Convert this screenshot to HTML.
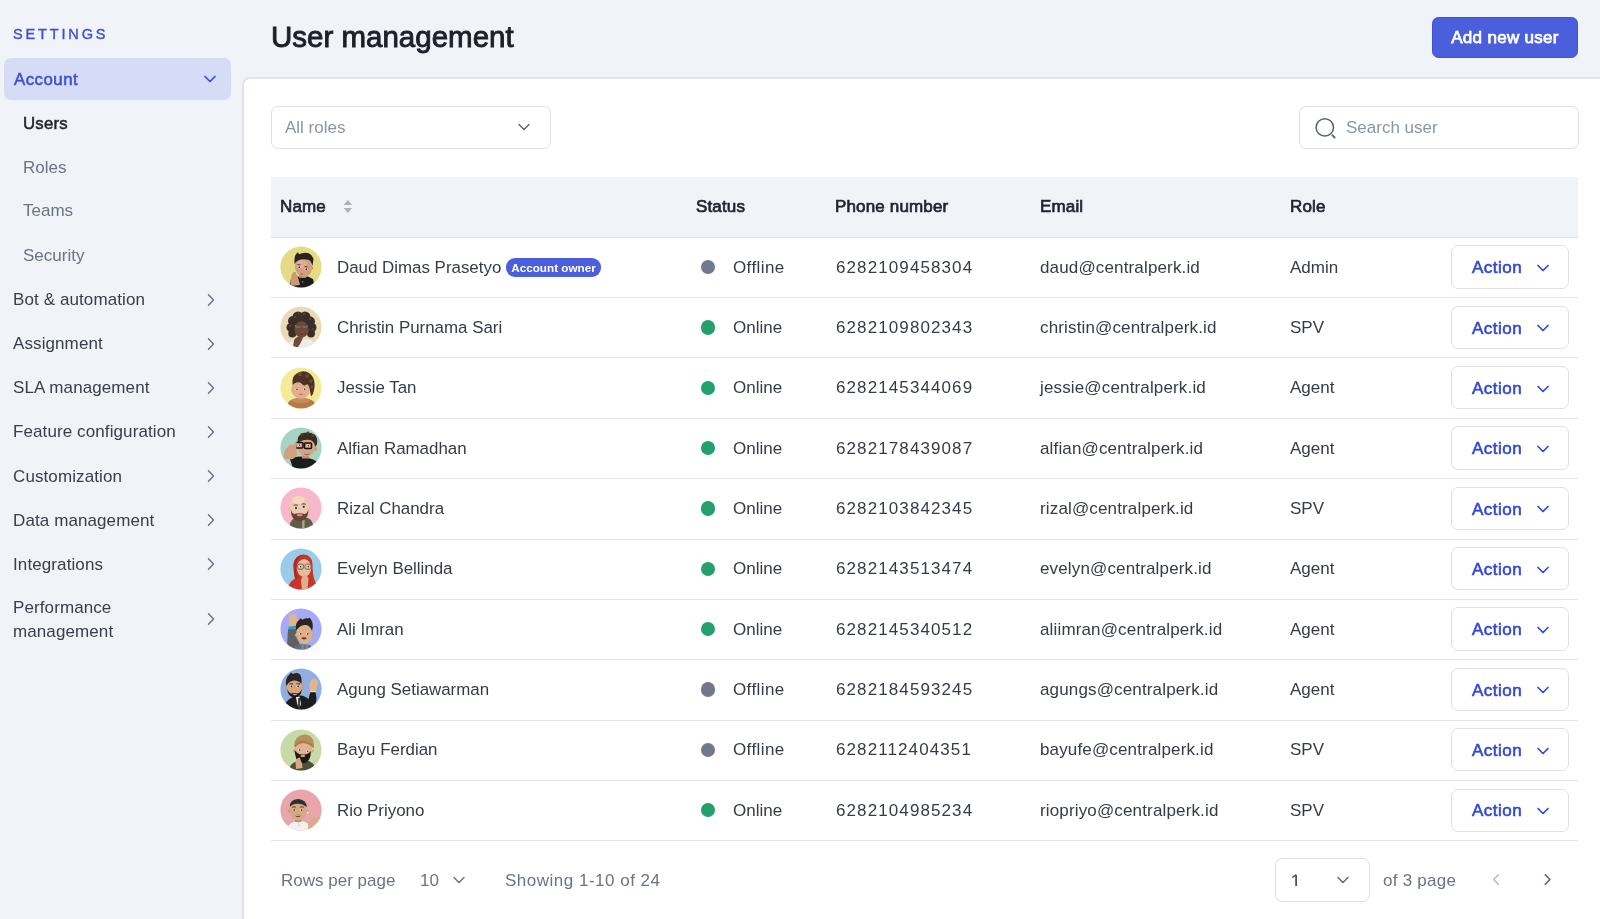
<!DOCTYPE html>
<html><head><meta charset="utf-8">
<style>
*{box-sizing:border-box;margin:0;padding:0}
html,body{width:1600px;height:919px;overflow:hidden;background:#F0F3F8;font-family:"Liberation Sans",sans-serif;color:#1F2430}
.abs{position:absolute;white-space:nowrap;will-change:transform}
.act span,.acc span,.btn,.badge{will-change:transform}
.settings{left:13px;top:26.4px;font-size:14.5px;letter-spacing:2.85px;color:#3D50D0;-webkit-text-stroke:0.4px #3D50D0}
.acc{position:absolute;left:3.75px;top:58px;width:227px;height:41.5px;background:#D6DBF6;border-radius:7px}
.acc span{position:absolute;left:10.4px;top:11.8px;letter-spacing:0.5px;font-size:16.8px;color:#3D50D0;-webkit-text-stroke:0.55px #3D50D0}
.nav{font-size:17px;letter-spacing:0.1px;color:#383E4B}
.sub{font-size:17px;color:#6B7385}
.chev{position:absolute}
#main{position:absolute;left:242.3px;top:77px;width:1360px;height:850px;background:#fff;border-top-left-radius:8px;border:2px solid #E2E4E9}
.title{left:271px;top:19.8px;font-size:29.5px;color:#1C202A;-webkit-text-stroke:0.9px #1C202A}
.btn{position:absolute;left:1432px;top:16.8px;width:146px;height:41.2px;letter-spacing:0.3px;background:#4B5EDB;border:1px solid #3E52D6;border-radius:6.5px;color:#fff;-webkit-text-stroke:0.75px #fff;font-size:17px;text-align:center;line-height:40px}
.inp{position:absolute;height:43.5px;border:1.5px solid #DEE0E5;border-radius:7px;background:#fff}
.ph{font-size:17px;color:#8D95A5}
.thead{position:absolute;left:271px;top:177px;width:1307px;height:61.2px;background:#F0F3F8;border-bottom:1.5px solid #DDE0E6}
.th{font-size:17px;letter-spacing:0.15px;color:#1F2430;-webkit-text-stroke:0.7px #1F2430;top:196.5px}
.row{position:absolute;left:271px;width:1307px;height:60.35px;border-bottom:1.6px solid #E2E4E9}
.td{font-size:17px;color:#363B47}
.ph2{letter-spacing:1.1px}
.nm{font-size:16.9px}
.em{letter-spacing:0.15px}
.dot{position:absolute;width:14.2px;height:14.2px;border-radius:50%}
.act{position:absolute;left:1451.3px;width:118px;height:43.3px;border:1.5px solid #DEE0E5;border-radius:7px;background:#fff}
.act span{position:absolute;left:19.5px;top:11.8px;letter-spacing:0.5px;font-size:17px;color:#3249D4;-webkit-text-stroke:0.6px #3249D4}
.badge{position:absolute;left:506px;top:257.5px;width:95px;height:18.5px;background:#4B5EDB;border-radius:9px;color:#fff;font-size:11.7px;font-weight:bold;text-align:center;line-height:19.5px}
.foot{font-size:17px;color:#6B7385}
</style></head><body>
<div class="abs settings">SETTINGS</div>
<div class="acc"><span>Account</span>
  <svg class="chev" style="left:199px;top:16px" width="14" height="10" viewBox="0 0 14 10"><path d="M2 2.5 L7 7.5 L12 2.5" fill="none" stroke="#3D50D0" stroke-width="1.7" stroke-linecap="round" stroke-linejoin="round"/></svg>
</div>
<div class="abs sub" style="left:22.5px;top:113.5px;color:#1F2430;-webkit-text-stroke:0.55px #1F2430;font-size:16.8px;letter-spacing:0.2px">Users</div>
<div class="abs sub" style="left:22.5px;top:157.5px">Roles</div>
<div class="abs sub" style="left:22.5px;top:201px">Teams</div>
<div class="abs sub" style="left:22.5px;top:246px">Security</div>
<div class="abs nav" style="left:12.8px;top:289.5px">Bot &amp; automation</div>
<div class="abs nav" style="left:12.8px;top:334px">Assignment</div>
<div class="abs nav" style="left:12.8px;top:378px">SLA management</div>
<div class="abs nav" style="left:12.8px;top:422px">Feature configuration</div>
<div class="abs nav" style="left:12.8px;top:466.5px">Customization</div>
<div class="abs nav" style="left:12.8px;top:510.5px">Data management</div>
<div class="abs nav" style="left:12.8px;top:555px">Integrations</div>
<div class="abs nav" style="left:12.8px;top:596.3px;line-height:23.5px">Performance<br>management</div>
<svg class="abs" style="left:205px;top:292.5px" width="12" height="14" viewBox="0 0 12 14"><path d="M3.5 1.8 L8.5 7 L3.5 12.2" fill="none" stroke="#667089" stroke-width="1.4" stroke-linecap="round" stroke-linejoin="round"/></svg><svg class="abs" style="left:205px;top:336.5px" width="12" height="14" viewBox="0 0 12 14"><path d="M3.5 1.8 L8.5 7 L3.5 12.2" fill="none" stroke="#667089" stroke-width="1.4" stroke-linecap="round" stroke-linejoin="round"/></svg><svg class="abs" style="left:205px;top:380.5px" width="12" height="14" viewBox="0 0 12 14"><path d="M3.5 1.8 L8.5 7 L3.5 12.2" fill="none" stroke="#667089" stroke-width="1.4" stroke-linecap="round" stroke-linejoin="round"/></svg><svg class="abs" style="left:205px;top:424.5px" width="12" height="14" viewBox="0 0 12 14"><path d="M3.5 1.8 L8.5 7 L3.5 12.2" fill="none" stroke="#667089" stroke-width="1.4" stroke-linecap="round" stroke-linejoin="round"/></svg><svg class="abs" style="left:205px;top:469px" width="12" height="14" viewBox="0 0 12 14"><path d="M3.5 1.8 L8.5 7 L3.5 12.2" fill="none" stroke="#667089" stroke-width="1.4" stroke-linecap="round" stroke-linejoin="round"/></svg><svg class="abs" style="left:205px;top:513px" width="12" height="14" viewBox="0 0 12 14"><path d="M3.5 1.8 L8.5 7 L3.5 12.2" fill="none" stroke="#667089" stroke-width="1.4" stroke-linecap="round" stroke-linejoin="round"/></svg><svg class="abs" style="left:205px;top:557px" width="12" height="14" viewBox="0 0 12 14"><path d="M3.5 1.8 L8.5 7 L3.5 12.2" fill="none" stroke="#667089" stroke-width="1.4" stroke-linecap="round" stroke-linejoin="round"/></svg><svg class="abs" style="left:205px;top:612.4px" width="12" height="14" viewBox="0 0 12 14"><path d="M3.5 1.8 L8.5 7 L3.5 12.2" fill="none" stroke="#667089" stroke-width="1.4" stroke-linecap="round" stroke-linejoin="round"/></svg>
<div class="abs title">User management</div>
<div class="btn">Add new user</div>
<div id="main"></div>
<div class="inp" style="left:270.5px;top:105.5px;width:280px"></div>
<div class="abs ph" style="left:285px;top:117.5px">All roles</div>
<svg class="abs" style="left:517px;top:122px" width="14" height="10" viewBox="0 0 14 10"><path d="M2 2.5 L7 7.5 L12 2.5" fill="none" stroke="#5F6878" stroke-width="1.5" stroke-linecap="round" stroke-linejoin="round"/></svg>
<div class="inp" style="left:1298.8px;top:105.5px;width:280.5px"></div>
<svg class="abs" style="left:1313px;top:115.5px" width="24" height="24" viewBox="0 0 24 24"><circle cx="11.8" cy="11.4" r="8.7" fill="none" stroke="#56627A" stroke-width="1.55"/><path d="M19.3 19.2 L21.6 21.5" stroke="#56627A" stroke-width="1.9" stroke-linecap="round"/></svg>
<div class="abs ph" style="left:1346px;top:117.5px">Search user</div>
<div class="thead"></div>
<div class="abs th" style="left:280.2px">Name</div>
<svg class="abs" style="left:342px;top:199px" width="12" height="16" viewBox="0 0 12 16"><path d="M1.7 5.9 L5.9 0.9 L10.1 5.9Z M1.7 9 L5.9 13.9 L10.1 9Z" fill="#ABB1BD"/></svg>
<div class="abs th" style="left:696px">Status</div>
<div class="abs th" style="left:834.6px">Phone number</div>
<div class="abs th" style="left:1039.6px">Email</div>
<div class="abs th" style="left:1290.4px">Role</div>
<div class="row" style="top:237.80px"></div>
<svg class="abs" style="left:280.2px;top:245.98px" width="42" height="42" viewBox="0 0 42 42"><defs><clipPath id="c0"><circle cx="21" cy="21" r="20.6"/></clipPath></defs><g clip-path="url(#c0)"><rect width="42" height="42" fill="#E5DB86"/>
<path d="M9 42 L11 33 L16 30.5 L22 31 L28 30.5 L33 33 L35 42Z" fill="#1C1C1C"/>
<rect x="19" y="27" width="7" height="5" fill="#B98560"/>
<circle cx="31.8" cy="22" r="1.6" fill="#C48F6C"/>
<ellipse cx="23.5" cy="21" rx="8.5" ry="10" transform="rotate(-12 23.5 21)" fill="#D2A07D"/>
<ellipse cx="22" cy="18" rx="5" ry="4" fill="#DDB08F"/>
<path d="M14.5 18 Q14 11 16 8 L18 6.2 L19 8.3 Q23 6 28 7 Q32 8.5 33.5 13 L32.5 20 Q31 15 29 14 Q23 12.5 18 14.5 Q15.5 16 14.5 18Z" fill="#2A2321"/>
<ellipse cx="19" cy="21.2" rx="1.6" ry="1.15" fill="#F4EEEA"/><circle cx="19.2" cy="21.2" r="0.85" fill="#2A2220"/><circle cx="19.2" cy="21.2" r="0.425" fill="#111"/><ellipse cx="26" cy="23.2" rx="1.6" ry="1.15" fill="#F4EEEA"/><circle cx="26.2" cy="23.2" r="0.85" fill="#2A2220"/><circle cx="26.2" cy="23.2" r="0.425" fill="#111"/>
<path d="M17.5 18.5 L20.5 18.8 M24.5 20.3 L27.5 21" stroke="#2A2321" stroke-width="0.8"/>
<ellipse cx="21.8" cy="28" rx="1.5" ry="0.7" fill="#A86A5A"/>
<path d="M10.5 40 Q10 33 12 28 Q13.5 25 15.5 26 Q17 29 18.5 33 L20 39Z" fill="#CE9A76"/>
<path d="M21.5 35 L23.5 35 L23 38Z" fill="#3A6AB0"/>
</g></svg>
<div class="abs td nm"  style="left:337px;top:257.57px">Daud Dimas Prasetyo</div>
<div class="dot" style="left:700.7px;top:259.98px;background:#717A8C"></div>
<div class="abs td st" style="left:733px;top:257.57px;letter-spacing:0.4px">Offline</div>
<div class="abs td ph2" style="left:835.5px;top:257.57px">6282109458304</div>
<div class="abs td em" style="left:1040px;top:257.57px">daud@centralperk.id</div>
<div class="abs td rl" style="left:1290px;top:257.57px">Admin</div>
<div class="act" style="top:245.38px"><span>Action</span><svg class="chev" style="left:84px;top:16.5px" width="14" height="10" viewBox="0 0 14 10"><path d="M2 2.5 L7 7.5 L12 2.5" fill="none" stroke="#3249D4" stroke-width="1.7" stroke-linecap="round" stroke-linejoin="round"/></svg></div>
<div class="row" style="top:298.15px"></div>
<svg class="abs" style="left:280.2px;top:306.33px" width="42" height="42" viewBox="0 0 42 42"><defs><clipPath id="c1"><circle cx="21" cy="21" r="20.6"/></clipPath></defs><g clip-path="url(#c1)"><rect width="42" height="42" fill="#EBDAB6"/>
<g fill="#3A2E29"><circle cx="13" cy="15" r="5"/><circle cx="18" cy="11" r="5.5"/><circle cx="25" cy="11" r="5.5"/><circle cx="30" cy="15.5" r="5"/><circle cx="32" cy="21.5" r="4.5"/><circle cx="11" cy="21.5" r="4.5"/><circle cx="12.3" cy="27.5" r="4"/><circle cx="31" cy="27.5" r="4"/><circle cx="21.5" cy="15" r="6.5"/></g>
<g fill="#54443A"><circle cx="15" cy="11" r="1.3"/><circle cx="24" cy="8" r="1.3"/><circle cx="30" cy="13" r="1.2"/><circle cx="10" cy="20" r="1.2"/><circle cx="33" cy="23" r="1.2"/><circle cx="19" cy="7.5" r="1.1"/></g>
<path d="M9 42 L10 36 L14 33.5 L22 33 L30 33.5 L33 36 L34 42Z" fill="#EEEDEB"/>
<ellipse cx="21.5" cy="23.5" rx="7" ry="8.3" fill="#6B4A39"/>
<path d="M15.5 21 L20.5 21 M22.5 21 L27.5 21" stroke="#7F8A88" stroke-width="0.9"/>
<ellipse cx="22" cy="27.8" rx="1.4" ry="1.7" fill="#B84A4A"/><ellipse cx="22" cy="28" rx="0.8" ry="1.1" fill="#2A1A1A"/>
<path d="M13 41 L14 34 Q17 30 21 29.5 Q23.5 30 22.5 33 L20 38 L18 41Z" fill="#6E4C3B"/>
</g></svg>
<div class="abs td nm"  style="left:337px;top:317.93px">Christin Purnama Sari</div>
<div class="dot" style="left:700.7px;top:320.33px;background:#23A06B"></div>
<div class="abs td st" style="left:733px;top:317.93px;letter-spacing:0">Online</div>
<div class="abs td ph2" style="left:835.5px;top:317.93px">6282109802343</div>
<div class="abs td em" style="left:1040px;top:317.93px">christin@centralperk.id</div>
<div class="abs td rl" style="left:1290px;top:317.93px">SPV</div>
<div class="act" style="top:305.73px"><span>Action</span><svg class="chev" style="left:84px;top:16.5px" width="14" height="10" viewBox="0 0 14 10"><path d="M2 2.5 L7 7.5 L12 2.5" fill="none" stroke="#3249D4" stroke-width="1.7" stroke-linecap="round" stroke-linejoin="round"/></svg></div>
<div class="row" style="top:358.50px"></div>
<svg class="abs" style="left:280.2px;top:366.68px" width="42" height="42" viewBox="0 0 42 42"><defs><clipPath id="c2"><circle cx="21" cy="21" r="20.6"/></clipPath></defs><g clip-path="url(#c2)"><rect width="42" height="42" fill="#F4EA98"/>
<path d="M6.5 42 Q7 35 11 33 Q16 31 21 32 Q27 31 31.5 33 Q36 35 36.5 42Z" fill="#B57A48"/>
<ellipse cx="21" cy="33.3" rx="9.5" ry="2.6" fill="#C68A55"/>
<rect x="18" y="28" width="6" height="4.5" fill="#C9916C"/>
<ellipse cx="20.8" cy="22.5" rx="9.5" ry="9.3" fill="#E3AE8C"/>
<ellipse cx="16" cy="25.5" rx="2.2" ry="1.4" fill="#EBA592" opacity="0.6"/><ellipse cx="25.5" cy="25.5" rx="2.2" ry="1.4" fill="#EBA592" opacity="0.6"/>
<path d="M12.5 18 Q11.5 10 16 7 Q20 3.5 25.5 4.5 Q31 6 33.5 11.5 Q35.5 17 34 23 Q33.5 27 31 29.5 L30 24 Q29.5 18.5 27 17 Q25 19.5 22.5 17.5 Q20 14.5 16.5 15.5 Q14 16 12.5 18Z" fill="#4A3325"/>
<g fill="#6A4A35"><circle cx="27" cy="9" r="2"/><circle cx="31" cy="14" r="1.8"/><circle cx="20" cy="7" r="2"/><circle cx="32" cy="20" r="1.4"/></g>
<ellipse cx="16.8" cy="22.2" rx="1.5" ry="1.0" fill="#F4EEEA"/><circle cx="17.0" cy="22.2" r="0.8" fill="#2A2220"/><circle cx="17.0" cy="22.2" r="0.4" fill="#111"/><ellipse cx="24.3" cy="22.2" rx="1.5" ry="1.0" fill="#F4EEEA"/><circle cx="24.5" cy="22.2" r="0.8" fill="#2A2220"/><circle cx="24.5" cy="22.2" r="0.4" fill="#111"/>
<ellipse cx="21" cy="27.4" rx="2.1" ry="0.8" fill="#C07A6A"/>
</g></svg>
<div class="abs td nm"  style="left:337px;top:378.27px">Jessie Tan</div>
<div class="dot" style="left:700.7px;top:380.68px;background:#23A06B"></div>
<div class="abs td st" style="left:733px;top:378.27px;letter-spacing:0">Online</div>
<div class="abs td ph2" style="left:835.5px;top:378.27px">6282145344069</div>
<div class="abs td em" style="left:1040px;top:378.27px">jessie@centralperk.id</div>
<div class="abs td rl" style="left:1290px;top:378.27px">Agent</div>
<div class="act" style="top:366.07px"><span>Action</span><svg class="chev" style="left:84px;top:16.5px" width="14" height="10" viewBox="0 0 14 10"><path d="M2 2.5 L7 7.5 L12 2.5" fill="none" stroke="#3249D4" stroke-width="1.7" stroke-linecap="round" stroke-linejoin="round"/></svg></div>
<div class="row" style="top:418.85px"></div>
<svg class="abs" style="left:280.2px;top:427.03px" width="42" height="42" viewBox="0 0 42 42"><defs><clipPath id="c3"><circle cx="21" cy="21" r="20.6"/></clipPath></defs><g clip-path="url(#c3)"><rect width="42" height="42" fill="#A6D4C4"/>
<path d="M10 32 Q14 29.5 20.5 29.5 L28 31 Q34 32 37 35 L35 42 L13 42Z" fill="#1D1D1D"/>
<rect x="22" y="26" width="7" height="5.5" fill="#C08E6C"/>
<circle cx="35" cy="22" r="2" fill="#CC9A78"/>
<ellipse cx="26.2" cy="20.5" rx="9" ry="9" fill="#D7A483"/>
<path d="M17.5 16 Q17 8 23 6 Q30 4.5 35 8 Q38 11 37 17 L35.5 20 Q34 14 30 13 Q24 12 19 15Z" fill="#3A2A22"/>
<g fill="#54402F"><circle cx="22" cy="7.5" r="1.4"/><circle cx="28" cy="6" r="1.4"/><circle cx="33" cy="8.5" r="1.3"/></g>
<ellipse cx="19.5" cy="18.3" rx="1.5" ry="1.1" fill="#F4EEEA"/><circle cx="19.7" cy="18.3" r="0.8" fill="#3A2A20"/><circle cx="19.7" cy="18.3" r="0.4" fill="#111"/><ellipse cx="28" cy="18.7" rx="1.5" ry="1.1" fill="#F4EEEA"/><circle cx="28.2" cy="18.7" r="0.8" fill="#3A2A20"/><circle cx="28.2" cy="18.7" r="0.4" fill="#111"/>
<rect x="15.8" y="15.5" width="7.2" height="5.5" rx="1" fill="none" stroke="#111" stroke-width="1.5"/>
<rect x="24.5" y="16" width="7" height="5.5" rx="1" fill="none" stroke="#111" stroke-width="1.5"/>
<path d="M24.5 27 Q27 28.5 29.5 27" stroke="#8A5A50" stroke-width="1" fill="none"/>
<path d="M4 31 Q3 26 6 22 L9.5 18 Q11.5 17 13.5 18.5 L15.5 15 Q17 14.5 17 16.5 L16 22 Q18 25 16.5 29 L13 32 Q8 33 4 31Z" fill="#D3A07E"/>
</g></svg>
<div class="abs td nm"  style="left:337px;top:438.62px">Alfian Ramadhan</div>
<div class="dot" style="left:700.7px;top:441.03px;background:#23A06B"></div>
<div class="abs td st" style="left:733px;top:438.62px;letter-spacing:0">Online</div>
<div class="abs td ph2" style="left:835.5px;top:438.62px">6282178439087</div>
<div class="abs td em" style="left:1040px;top:438.62px">alfian@centralperk.id</div>
<div class="abs td rl" style="left:1290px;top:438.62px">Agent</div>
<div class="act" style="top:426.43px"><span>Action</span><svg class="chev" style="left:84px;top:16.5px" width="14" height="10" viewBox="0 0 14 10"><path d="M2 2.5 L7 7.5 L12 2.5" fill="none" stroke="#3249D4" stroke-width="1.7" stroke-linecap="round" stroke-linejoin="round"/></svg></div>
<div class="row" style="top:479.20px"></div>
<svg class="abs" style="left:280.2px;top:487.38px" width="42" height="42" viewBox="0 0 42 42"><defs><clipPath id="c4"><circle cx="21" cy="21" r="20.6"/></clipPath></defs><g clip-path="url(#c4)"><rect width="42" height="42" fill="#F7B8CE"/>
<path d="M9 42 Q9.5 35 13 32 L19 30 L24 30 L29 31.5 Q33 34 34 42Z" fill="#5D5E42"/>
<rect x="22.3" y="33" width="2.2" height="9" fill="#A8A8A0"/>
<circle cx="9.5" cy="22" r="1.7" fill="#E5B99C"/><circle cx="29" cy="21" r="1.7" fill="#E5B99C"/>
<ellipse cx="19.3" cy="19.5" rx="10.2" ry="11.5" fill="#EEC7AC"/>
<ellipse cx="18.5" cy="13" rx="6" ry="4" fill="#F4D6C2"/>
<path d="M10.8 23 Q11 31 16 33.5 Q20 35 24 33 Q28.5 30 28.5 22.5 Q27 26.5 25 27 Q19.5 25.5 14 27 Q12 26 10.8 23Z" fill="#6A4232"/>
<ellipse cx="19.6" cy="28.2" rx="3" ry="1.1" fill="#C99A88"/>
<ellipse cx="15.8" cy="21" rx="2" ry="1.5" fill="#F4EEEA"/><circle cx="16" cy="21" r="1.2" fill="#2C5878"/><circle cx="16" cy="21" r="0.55" fill="#111"/>
<ellipse cx="23.5" cy="19.8" rx="2" ry="1.5" fill="#F4EEEA"/><circle cx="23.7" cy="19.8" r="1.2" fill="#2C5878"/><circle cx="23.7" cy="19.8" r="0.55" fill="#111"/>
<path d="M13.5 18.5 Q15.5 17.2 17.8 18.3 M21.5 17.3 Q23.5 16.2 25.8 17.3" stroke="#4A3025" stroke-width="0.9" fill="none"/>
</g></svg>
<div class="abs td nm"  style="left:337px;top:498.97px">Rizal Chandra</div>
<div class="dot" style="left:700.7px;top:501.38px;background:#23A06B"></div>
<div class="abs td st" style="left:733px;top:498.97px;letter-spacing:0">Online</div>
<div class="abs td ph2" style="left:835.5px;top:498.97px">6282103842345</div>
<div class="abs td em" style="left:1040px;top:498.97px">rizal@centralperk.id</div>
<div class="abs td rl" style="left:1290px;top:498.97px">SPV</div>
<div class="act" style="top:486.77px"><span>Action</span><svg class="chev" style="left:84px;top:16.5px" width="14" height="10" viewBox="0 0 14 10"><path d="M2 2.5 L7 7.5 L12 2.5" fill="none" stroke="#3249D4" stroke-width="1.7" stroke-linecap="round" stroke-linejoin="round"/></svg></div>
<div class="row" style="top:539.55px"></div>
<svg class="abs" style="left:280.2px;top:547.72px" width="42" height="42" viewBox="0 0 42 42"><defs><clipPath id="c5"><circle cx="21" cy="21" r="20.6"/></clipPath></defs><g clip-path="url(#c5)"><rect width="42" height="42" fill="#9ACCEA"/>
<path d="M7 42 Q9 34 15 30.5 Q13.5 24 13.5 16 Q15 7 24 6.5 Q32 7 32.5 16 Q32.5 27 35 33 Q37 37 37 42Z" fill="#C93526"/>
<path d="M13.5 16 Q15 7 24 6.5 Q17 9 16 17 Q16 26 18 31 L15 30.5 Q13.5 24 13.5 16Z" fill="#A82A20"/>
<ellipse cx="24" cy="20" rx="7.2" ry="9" fill="#E6BC9E"/>
<ellipse cx="20.4" cy="18.7" rx="1.3" ry="1.1" fill="#F4EEEA"/><circle cx="20.599999999999998" cy="18.7" r="0.8" fill="#2A2220"/><circle cx="20.599999999999998" cy="18.7" r="0.4" fill="#111"/><ellipse cx="28" cy="18.7" rx="1.3" ry="1.1" fill="#F4EEEA"/><circle cx="28.2" cy="18.7" r="0.8" fill="#2A2220"/><circle cx="28.2" cy="18.7" r="0.4" fill="#111"/>
<rect x="17.5" y="16.2" width="6" height="5" rx="1.5" fill="none" stroke="#6F6A66" stroke-width="1"/>
<rect x="25" y="16.2" width="6" height="5" rx="1.5" fill="none" stroke="#6F6A66" stroke-width="1"/>
<path d="M22 42 L21 33 Q21.5 28 24.5 27 Q28 27.5 28.5 31 L28 36 L27.5 42Z" fill="#DDB090"/>
</g></svg>
<div class="abs td nm"  style="left:337px;top:559.32px">Evelyn Bellinda</div>
<div class="dot" style="left:700.7px;top:561.72px;background:#23A06B"></div>
<div class="abs td st" style="left:733px;top:559.32px;letter-spacing:0">Online</div>
<div class="abs td ph2" style="left:835.5px;top:559.32px">6282143513474</div>
<div class="abs td em" style="left:1040px;top:559.32px">evelyn@centralperk.id</div>
<div class="abs td rl" style="left:1290px;top:559.32px">Agent</div>
<div class="act" style="top:547.12px"><span>Action</span><svg class="chev" style="left:84px;top:16.5px" width="14" height="10" viewBox="0 0 14 10"><path d="M2 2.5 L7 7.5 L12 2.5" fill="none" stroke="#3249D4" stroke-width="1.7" stroke-linecap="round" stroke-linejoin="round"/></svg></div>
<div class="row" style="top:599.90px"></div>
<svg class="abs" style="left:280.2px;top:608.07px" width="42" height="42" viewBox="0 0 42 42"><defs><clipPath id="c6"><circle cx="21" cy="21" r="20.6"/></clipPath></defs><g clip-path="url(#c6)"><rect width="42" height="42" fill="#A5AAF4"/>
<path d="M8 21 L17 21 L17.5 30 L20 37 L12 42 L7 39Z" fill="#5F6063"/>
<path d="M14 42 L15 38 L22 36 L30 37 L34 42Z" fill="#6A6B6E"/>
<rect x="21.5" y="36.3" width="6.5" height="6" fill="#36A8C8"/><path d="M24 37 L25.6 37 L26 42 L23.5 42Z" fill="#D24A3A"/>
<path d="M9.2 19 Q8.5 13 9 9 L10 5.8 Q11 5.3 11.5 6 L12 9 L12.5 5 Q13.3 4.5 14 5.2 L14.3 9 L15.3 5.8 Q16 5.3 16.5 6 L16.5 10.5 Q18 10.5 19.5 11.5 L20 14 Q18 16 17.5 19Z" fill="#E2B48A"/>
<rect x="8.5" y="18" width="9" height="3" fill="#2B9FBF" transform="rotate(-8 13 19)"/>
<circle cx="16.2" cy="27" r="1.6" fill="#D19E78"/><circle cx="32.5" cy="27" r="1.6" fill="#D19E78"/>
<ellipse cx="24.3" cy="26" rx="8.3" ry="9.8" fill="#E0AF88"/>
<path d="M16 22 Q15 15 19 12 L21 10 L22 12 Q25 9.5 28 10.5 L29.5 9.5 Q33 13 32.8 19 L32 23 Q30 17.5 26 17 Q21 16.5 17.5 21Z" fill="#2A2522"/>
<ellipse cx="20.5" cy="25.8" rx="1.5" ry="1.1" fill="#F4EEEA"/><circle cx="20.7" cy="25.8" r="0.85" fill="#3A2A20"/><circle cx="20.7" cy="25.8" r="0.425" fill="#111"/><ellipse cx="27.6" cy="25.8" rx="1.5" ry="1.1" fill="#F4EEEA"/><circle cx="27.8" cy="25.8" r="0.85" fill="#3A2A20"/><circle cx="27.8" cy="25.8" r="0.425" fill="#111"/>
<ellipse cx="24" cy="30.3" rx="2.6" ry="1.1" fill="#6A3A35"/>
</g></svg>
<div class="abs td nm"  style="left:337px;top:619.67px">Ali Imran</div>
<div class="dot" style="left:700.7px;top:622.07px;background:#23A06B"></div>
<div class="abs td st" style="left:733px;top:619.67px;letter-spacing:0">Online</div>
<div class="abs td ph2" style="left:835.5px;top:619.67px">6282145340512</div>
<div class="abs td em" style="left:1040px;top:619.67px">aliimran@centralperk.id</div>
<div class="abs td rl" style="left:1290px;top:619.67px">Agent</div>
<div class="act" style="top:607.48px"><span>Action</span><svg class="chev" style="left:84px;top:16.5px" width="14" height="10" viewBox="0 0 14 10"><path d="M2 2.5 L7 7.5 L12 2.5" fill="none" stroke="#3249D4" stroke-width="1.7" stroke-linecap="round" stroke-linejoin="round"/></svg></div>
<div class="row" style="top:660.25px"></div>
<svg class="abs" style="left:280.2px;top:668.42px" width="42" height="42" viewBox="0 0 42 42"><defs><clipPath id="c7"><circle cx="21" cy="21" r="20.6"/></clipPath></defs><g clip-path="url(#c7)"><rect width="42" height="42" fill="#8EAFE0"/>
<path d="M5 36 Q8 31 13 29 L18 27.5 L22 27.5 Q26 28.5 28.5 31 L30.5 23.5 L35.5 23.5 Q37 30 36 35 L31 42 L8 42Z" fill="#1D1D20"/>
<path d="M16 29 L19.5 28.5 L21 36 L19 41 L17 35Z" fill="#EEEEEE"/><rect x="18.3" y="30" width="1.5" height="10" fill="#111"/>
<rect x="30" y="22" width="6" height="2.2" fill="#DDDDDD"/>
<path d="M30 23 Q29 18 29.5 14.5 L32 11 Q34 10.5 35.5 11 L38 12.5 Q38.5 15 37 18 L36 23Z" fill="#E2B48E"/>
<circle cx="6.5" cy="20" r="1.5" fill="#C9966F"/><circle cx="22.5" cy="19.5" r="1.5" fill="#C9966F"/>
<ellipse cx="14.5" cy="19" rx="8.2" ry="9.2" fill="#D6A47F"/>
<path d="M7 21 Q8 29 14.5 29.5 Q21 29 22 21 Q20 25 18 25.5 Q14.5 24.5 11 25.5 Q8.5 24.5 7 21Z" fill="#1F1B1A"/>
<ellipse cx="14.8" cy="26.5" rx="2.2" ry="0.8" fill="#C9A090"/>
<path d="M6 18 Q5 10 9 7 L11 4.5 L13 6 Q17 4 20 6.5 Q22 9 21.5 16 Q19 12.5 14 12.5 Q9 13 7 17Z" fill="#2A2422"/>
<ellipse cx="11.3" cy="18.5" rx="1.6" ry="1.2" fill="#F4EEEA"/><circle cx="11.5" cy="18.5" r="0.9" fill="#2A2220"/><circle cx="11.5" cy="18.5" r="0.45" fill="#111"/><ellipse cx="18" cy="18.3" rx="1.6" ry="1.2" fill="#F4EEEA"/><circle cx="18.2" cy="18.3" r="0.9" fill="#2A2220"/><circle cx="18.2" cy="18.3" r="0.45" fill="#111"/>
<path d="M9.5 16 L13 15.8 M16.5 15.8 L20 16" stroke="#2A2422" stroke-width="0.9"/>
</g></svg>
<div class="abs td nm"  style="left:337px;top:680.02px">Agung Setiawarman</div>
<div class="dot" style="left:700.7px;top:682.42px;background:#717A8C"></div>
<div class="abs td st" style="left:733px;top:680.02px;letter-spacing:0.4px">Offline</div>
<div class="abs td ph2" style="left:835.5px;top:680.02px">6282184593245</div>
<div class="abs td em" style="left:1040px;top:680.02px">agungs@centralperk.id</div>
<div class="abs td rl" style="left:1290px;top:680.02px">Agent</div>
<div class="act" style="top:667.83px"><span>Action</span><svg class="chev" style="left:84px;top:16.5px" width="14" height="10" viewBox="0 0 14 10"><path d="M2 2.5 L7 7.5 L12 2.5" fill="none" stroke="#3249D4" stroke-width="1.7" stroke-linecap="round" stroke-linejoin="round"/></svg></div>
<div class="row" style="top:720.60px"></div>
<svg class="abs" style="left:280.2px;top:728.77px" width="42" height="42" viewBox="0 0 42 42"><defs><clipPath id="c8"><circle cx="21" cy="21" r="20.6"/></clipPath></defs><g clip-path="url(#c8)"><rect width="42" height="42" fill="#C8DAA7"/>
<path d="M8.5 42 Q10 35 15 33 L20 31.5 L27 31.5 Q32 33 34 36 L34 42Z" fill="#4A5238"/>
<circle cx="14.5" cy="22" r="1.6" fill="#D4A080"/><circle cx="32.3" cy="22" r="1.6" fill="#D4A080"/>
<ellipse cx="23.4" cy="20.5" rx="8.8" ry="9.3" fill="#E2B291"/>
<path d="M14.7 21 Q15 30 19 33.5 Q23 35.5 27 33 Q31 29.5 30.8 22 Q28 26 23 25.5 Q18 26 14.7 21Z" fill="#1E1A18"/>
<ellipse cx="22.8" cy="27" rx="2.5" ry="0.9" fill="#D8B49E"/>
<path d="M14.3 17 Q14 7 24 5.5 Q33.5 5.5 34 15 L33.5 19 Q28 14 23 14 Q17.5 14.5 15 18.5Z" fill="#B8905E"/>
<path d="M15 18.5 Q17.5 14.5 23 14 Q28 14 33.5 19 L33.8 16.5 Q28 11.5 23 11.8 Q17 12 14.5 16Z" fill="#A68050"/>
<ellipse cx="19.5" cy="20.8" rx="1.6" ry="1.1" fill="#F4EEEA"/><circle cx="19.7" cy="20.8" r="0.85" fill="#3F5A48"/><circle cx="19.7" cy="20.8" r="0.425" fill="#111"/><ellipse cx="27.5" cy="22.3" rx="1.6" ry="1.1" fill="#F4EEEA"/><circle cx="27.7" cy="22.3" r="0.85" fill="#3F5A48"/><circle cx="27.7" cy="22.3" r="0.425" fill="#111"/>
<path d="M16 40 L15.5 33.5 Q16 30 18 29 L19.5 28.5 Q20.5 29 20.5 31 L22 34 L22.5 39Z" fill="#D9A886"/>
</g></svg>
<div class="abs td nm"  style="left:337px;top:740.37px">Bayu Ferdian</div>
<div class="dot" style="left:700.7px;top:742.77px;background:#717A8C"></div>
<div class="abs td st" style="left:733px;top:740.37px;letter-spacing:0.4px">Offline</div>
<div class="abs td ph2" style="left:835.5px;top:740.37px">6282112404351</div>
<div class="abs td em" style="left:1040px;top:740.37px">bayufe@centralperk.id</div>
<div class="abs td rl" style="left:1290px;top:740.37px">SPV</div>
<div class="act" style="top:728.17px"><span>Action</span><svg class="chev" style="left:84px;top:16.5px" width="14" height="10" viewBox="0 0 14 10"><path d="M2 2.5 L7 7.5 L12 2.5" fill="none" stroke="#3249D4" stroke-width="1.7" stroke-linecap="round" stroke-linejoin="round"/></svg></div>
<div class="row" style="top:780.95px"></div>
<svg class="abs" style="left:280.2px;top:789.12px" width="42" height="42" viewBox="0 0 42 42"><defs><clipPath id="c9"><circle cx="21" cy="21" r="20.6"/></clipPath></defs><g clip-path="url(#c9)"><rect width="42" height="42" fill="#E8A5AA"/>
<path d="M6 42 Q7 37 12 33.5 L16 32 L22 32 Q26 33 28.5 35 L28.5 42Z" fill="#F1F1F1"/>
<path d="M18.5 33 L19 38" stroke="#C9C9C9" stroke-width="0.8"/>
<rect x="15" y="28.5" width="6.5" height="4.5" fill="#C38F6A"/>
<path d="M28 42 L28.5 34 Q30 31 33 30 L37 28.5 Q39.5 27.5 41 28.5 Q41 30.5 38.5 32 L33 33.5 L31.5 42Z" fill="#DCAA84"/>
<circle cx="9.5" cy="22" r="1.6" fill="#C9986F"/><circle cx="27" cy="22" r="1.6" fill="#C9986F"/><circle cx="27.6" cy="23.5" r="0.9" fill="#F5F5F5"/>
<ellipse cx="18.2" cy="21.5" rx="8.7" ry="10" fill="#D8A882"/>
<path d="M9.8 18 Q9.5 10.5 18 10 Q26.5 10.5 26.8 18 Q22 14.5 18 14.8 Q13 14.5 9.8 18Z" fill="#2E3038"/>
<ellipse cx="14" cy="21" rx="1.5" ry="1.1" fill="#F4EEEA"/><circle cx="14.2" cy="21" r="0.85" fill="#2A2220"/><circle cx="14.2" cy="21" r="0.425" fill="#111"/><ellipse cx="21.5" cy="21" rx="1.5" ry="1.1" fill="#F4EEEA"/><circle cx="21.7" cy="21" r="0.85" fill="#2A2220"/><circle cx="21.7" cy="21" r="0.425" fill="#111"/>
<path d="M12 18.3 Q14 17.3 16 18.2 M19.8 18.2 Q21.8 17.3 23.8 18.3" stroke="#3A2A25" stroke-width="0.8" fill="none"/>
<ellipse cx="18" cy="26.8" rx="2.5" ry="1.2" fill="#6A3A35"/><rect x="16" y="25.8" width="4" height="0.8" fill="#F2F2F2"/>
</g></svg>
<div class="abs td nm"  style="left:337px;top:800.72px">Rio Priyono</div>
<div class="dot" style="left:700.7px;top:803.12px;background:#23A06B"></div>
<div class="abs td st" style="left:733px;top:800.72px;letter-spacing:0">Online</div>
<div class="abs td ph2" style="left:835.5px;top:800.72px">6282104985234</div>
<div class="abs td em" style="left:1040px;top:800.72px">riopriyo@centralperk.id</div>
<div class="abs td rl" style="left:1290px;top:800.72px">SPV</div>
<div class="act" style="top:788.52px"><span>Action</span><svg class="chev" style="left:84px;top:16.5px" width="14" height="10" viewBox="0 0 14 10"><path d="M2 2.5 L7 7.5 L12 2.5" fill="none" stroke="#3249D4" stroke-width="1.7" stroke-linecap="round" stroke-linejoin="round"/></svg></div>
<div class="badge">Account owner</div>
<div class="abs foot" style="left:280.5px;top:870.5px">Rows per page</div>
<div class="abs foot" style="left:420px;top:870.5px">10</div>
<svg class="abs" style="left:452px;top:875px" width="14" height="10" viewBox="0 0 14 10"><path d="M2 2.5 L7 7.5 L12 2.5" fill="none" stroke="#6B7588" stroke-width="1.5" stroke-linecap="round" stroke-linejoin="round"/></svg>
<div class="abs foot" style="left:505px;top:870.5px;letter-spacing:0.5px">Showing 1-10 of 24</div>
<div class="inp" style="left:1275px;top:858px;width:95px;height:44px"></div>
<svg class="abs" style="left:1290px;top:872px" width="12" height="16" viewBox="0 0 12 16"><path d="M6.1 2.9 L6.1 13.9" stroke="#3A3F4A" stroke-width="1.6"/><path d="M2.3 5.3 Q4.8 4.2 6.1 2.6" stroke="#3A3F4A" stroke-width="1.4" fill="none"/></svg>
<svg class="abs" style="left:1336px;top:875px" width="14" height="10" viewBox="0 0 14 10"><path d="M2 2.5 L7 7.5 L12 2.5" fill="none" stroke="#5F6878" stroke-width="1.5" stroke-linecap="round" stroke-linejoin="round"/></svg>
<div class="abs foot" style="left:1383px;top:870.5px;letter-spacing:0.25px">of 3 page</div>
<svg class="abs" style="left:1490px;top:872px" width="12" height="16" viewBox="0 0 12 16"><path d="M8.3 2.7 L3.7 7.45 L8.3 12.2" fill="none" stroke="#B3BAC6" stroke-width="1.5" stroke-linecap="round" stroke-linejoin="round"/></svg>
<svg class="abs" style="left:1541px;top:872px" width="12" height="16" viewBox="0 0 12 16"><path d="M4.3 2.7 L8.9 7.45 L4.3 12.2" fill="none" stroke="#56627A" stroke-width="1.6" stroke-linecap="round" stroke-linejoin="round"/></svg>
</body></html>
